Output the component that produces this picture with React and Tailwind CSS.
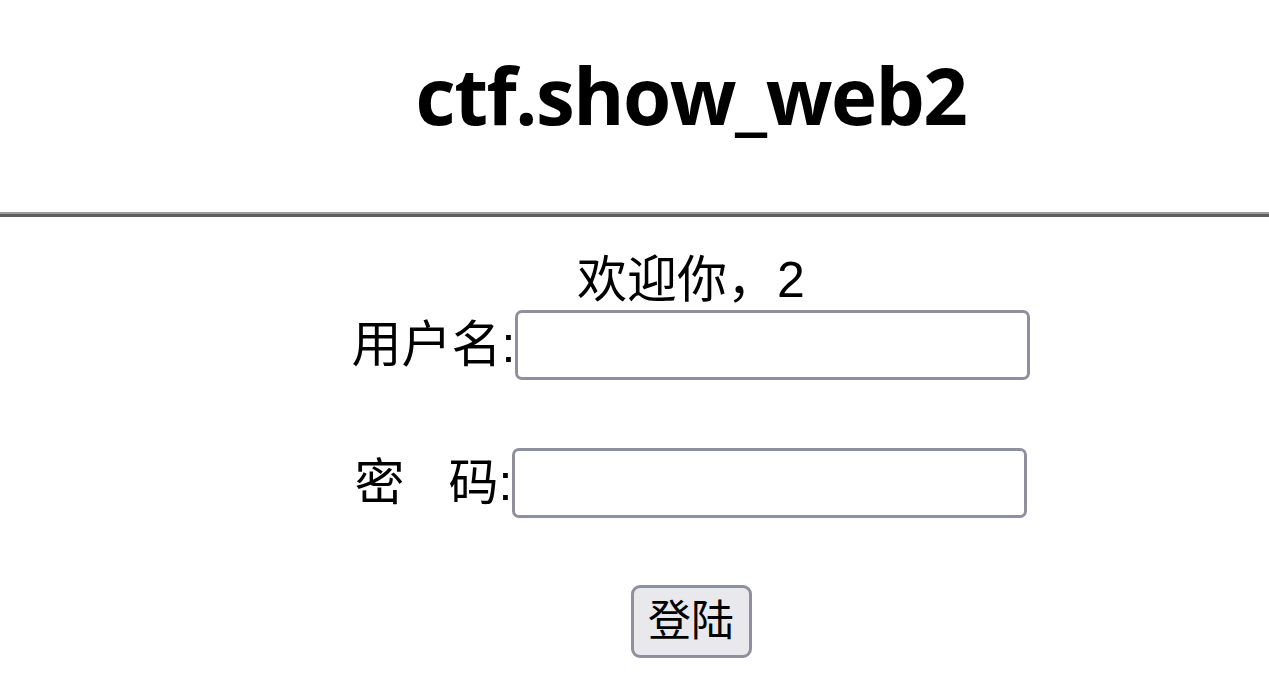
export default function App() {
  const cjk = { fontFamily: '"Liberation Sans", "Noto Sans CJK SC", sans-serif' };
  return (
    <div className="w-[1269px] h-[679px] overflow-hidden bg-white text-black" style={cjk}>
      <div className="h-[212px] pl-[113px] flex justify-center">
        <h1
          className="mt-[45px] text-[78px] font-bold leading-[100px] tracking-[-1.5px]"
          style={{ fontFamily: '"Open Sans", "Noto Sans", sans-serif' }}
        >
          ctf.show_web2
        </h1>
      </div>
      <div className="h-[5px] border-t-[2px] border-[#9c9c9c] bg-[#5f5f5f]" />
      <div className="pl-[113px] flex flex-col items-center">
        <div className="mt-[33px] text-[50px] leading-[60px]">欢迎你，2</div>
        <div className="flex items-center h-[70px]">
          <span className="text-[50px] leading-[60px]">用户名:</span>
          <input className="w-[515px] h-[70px] border-[3px] border-[#8f8f9d] rounded-[7px] bg-white outline-none" />
        </div>
        <div className="h-[68px]" />
        <div className="flex items-center h-[70px]">
          <span className="text-[50px] leading-[60px]">
            密<span className="inline-block w-[44px]" />码:
          </span>
          <input className="w-[515px] h-[70px] border-[3px] border-[#8f8f9d] rounded-[7px] bg-white outline-none" />
        </div>
        <div className="h-[67px]" />
        <button className="w-[121px] h-[73px] border-[3px] border-[#8f8f9d] rounded-[9px] bg-[#e9e9ed] text-[43px] leading-none">
          登陆
        </button>
      </div>
    </div>
  );
}
